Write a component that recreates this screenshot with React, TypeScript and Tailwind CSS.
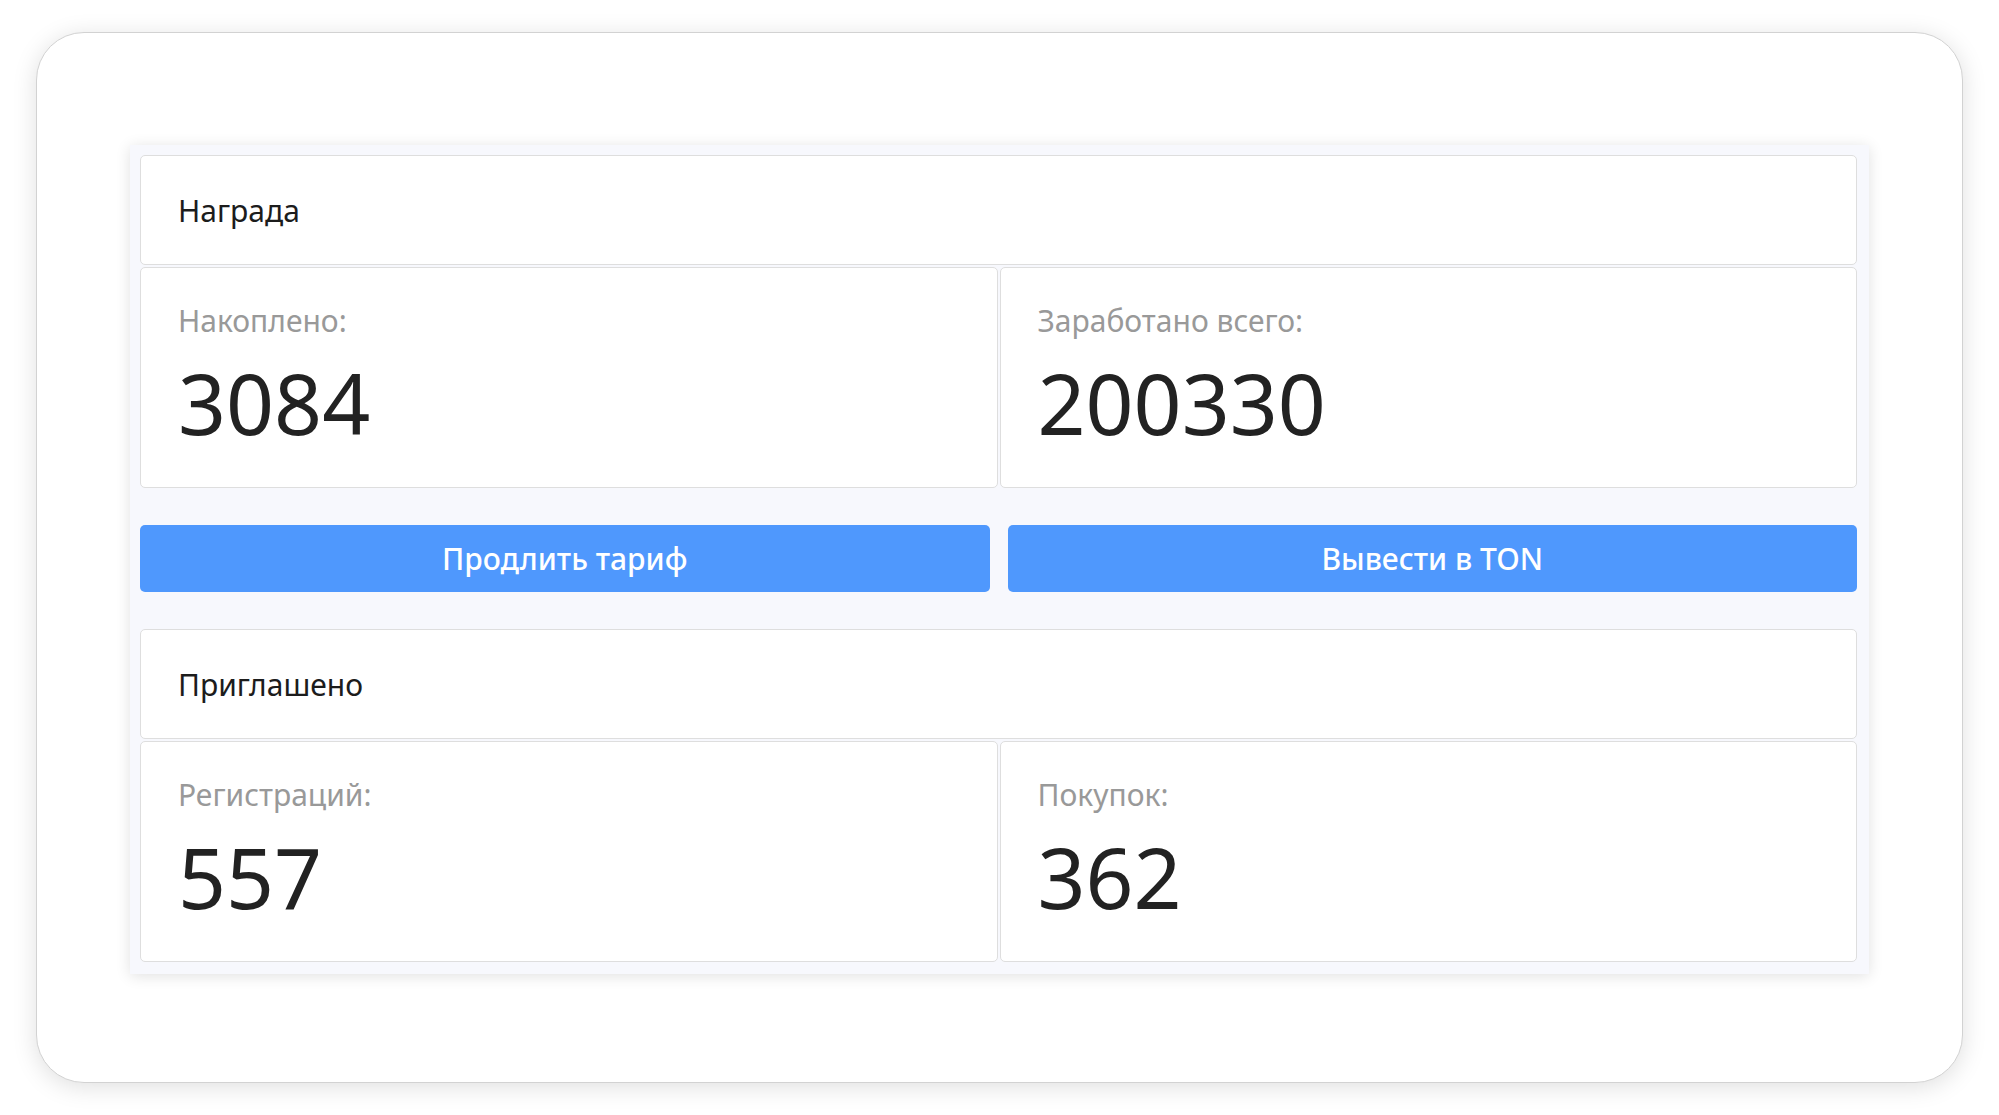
const font = { fontFamily: '"Noto Sans", "Open Sans", sans-serif' }

function Stat({ label, value }: { label: string; value: string }) {
  return (
    <div className="rounded-[5px] border border-[#dedede] bg-white px-[37px] pb-[41px] pt-[35px]">
      <div className="text-[30px] leading-[36px] text-[#999999]">{label}</div>
      <div className="mt-[21px] text-[84px] leading-[86px] text-[#222222]">{value}</div>
    </div>
  )
}

function Section({ title, stats }: { title: string; stats: [string, string][] }) {
  return (
    <div className="flex flex-col gap-[2px]">
      <div className="flex h-[110px] items-center rounded-[5px] border border-[#dedede] bg-white px-[37px] text-[30px] text-[#1c1c1c]">
        {title}
      </div>
      <div className="grid grid-cols-2 gap-[2px]">
        {stats.map(([label, value]) => (
          <Stat key={label} label={label} value={value} />
        ))}
      </div>
    </div>
  )
}

export default function App() {
  return (
    <div className="min-h-[1115px] bg-white px-[36px] pt-[32px]" style={font}>
      <div className="h-[1051px] rounded-[48px] border border-[#d2d2d2] bg-white px-[93px] pt-[112px] shadow-[0_4px_24px_rgba(0,0,0,0.13)]">
        <div className="flex flex-col bg-[#f7f8fd] pb-[12px] pl-[10px] pr-[12px] pt-[10px] shadow-[0_2px_14px_rgba(0,0,0,0.12)]">
          <Section
            title="Награда"
            stats={[
              ['Накоплено:', '3084'],
              ['Заработано всего:', '200330'],
            ]}
          />
          <div className="my-[37px] grid grid-cols-2 gap-[18px]">
            <button className="h-[67px] rounded-[5px] bg-[#4f98fd] text-[30px] font-medium text-white">
              Продлить тариф
            </button>
            <button className="h-[67px] rounded-[5px] bg-[#4f98fd] text-[30px] font-medium text-white">
              Вывести в TON
            </button>
          </div>
          <Section
            title="Приглашено"
            stats={[
              ['Регистраций:', '557'],
              ['Покупок:', '362'],
            ]}
          />
        </div>
      </div>
    </div>
  )
}
